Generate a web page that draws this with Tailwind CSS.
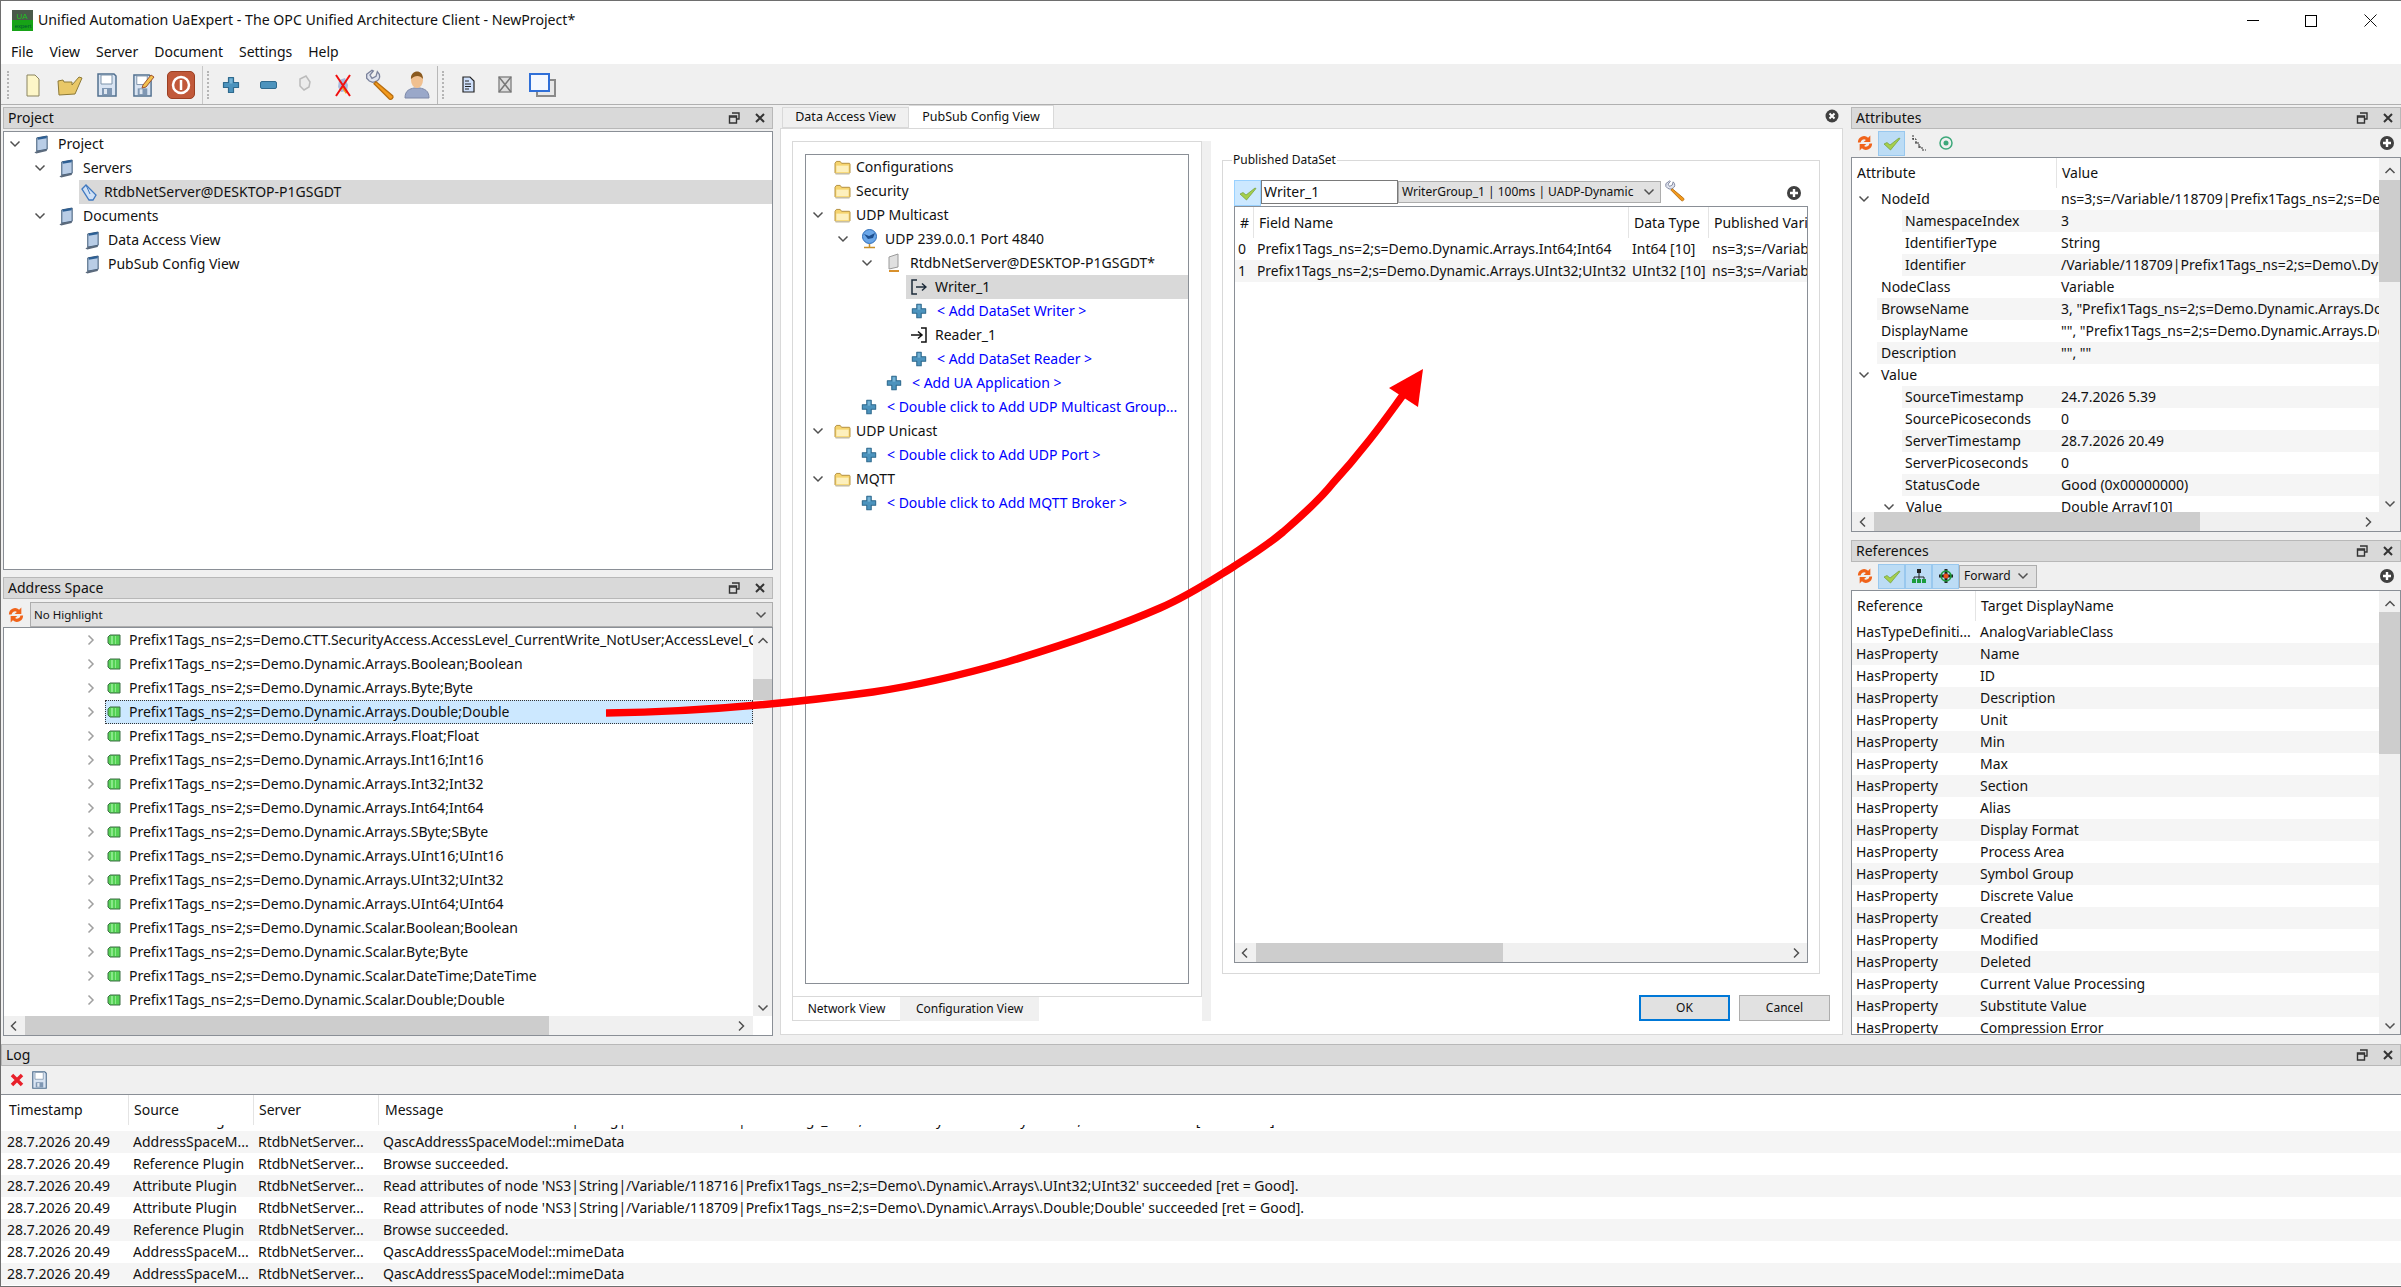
<!DOCTYPE html>
<html lang="en">
<head>
<meta charset="UTF-8">
<script src="https://cdn.jsdelivr.net/npm/@tailwindcss/browser@4"></script>
<title>UaExpert</title>
</head>
<body>
<svg class="hidden">
  <symbol id="chevd" viewBox="0 0 12 12"><path d="M1.500 3.500 6 8l4.500-4.500" fill="none" stroke="#505050" stroke-width="1.500"/></symbol>
  <symbol id="chevr" viewBox="0 0 12 12"><path d="M3.500 1.500 8 6l-4.500 4.500" fill="none" stroke="#a0a0a0" stroke-width="1.500"/></symbol>
  <symbol id="chevl" viewBox="0 0 12 12"><path d="M8 1.500 3.500 6 8 10.500" fill="none" stroke="#505050" stroke-width="1.500"/></symbol>
  <symbol id="chevr2" viewBox="0 0 12 12"><path d="M4 1.500 8.500 6 4 10.500" fill="none" stroke="#505050" stroke-width="1.500"/></symbol>
  <symbol id="chevu" viewBox="0 0 12 12"><path d="M1.500 8 6 3.500 10.500 8" fill="none" stroke="#505050" stroke-width="1.500"/></symbol>
  <symbol id="book" viewBox="0 0 18 20"><path d="M4 3 15 1v14L4 17z" fill="#b9cde6" stroke="#33506f"/><path d="M1.500 18.500 4 17l11-2-.5 2-11 2.500z" fill="#5b6a7c"/><path d="M5 2.600 14.500 1v2.500L5 5z" fill="#2c5f94"/></symbol>
  <symbol id="folder" viewBox="0 0 18 16"><path d="M1 3.500 2.500 1.500h4l1.500 2h8.500l.5 1v9l-1 1H2l-1-1z" fill="#f6d46e" stroke="#b08c3a"/><path d="M2.500 6h13v7h-13z" fill="#fdf0bd"/><path d="M1.500 14h15v1.500h-15z" fill="#c9c4b2"/></symbol>
  <symbol id="plus" viewBox="0 0 18 18"><path d="M6.500 1.500h5v5h5v5h-5v5h-5v-5h-5v-5h5z" fill="#4c93bd" stroke="#2f6a8e" stroke-linejoin="round" stroke-width="1.200"/><path d="M7.500 2.500h3v5h-3z" fill="#77b4d6"/></symbol>
  <symbol id="tag" viewBox="0 0 14 12"><path d="M3 1h10v10H3L1 9V3z" fill="#55d155" stroke="#3f6f47"/><path d="M4 2h2v8H4zM8 2h1v8H8z" fill="#8be88b"/></symbol>
  <symbol id="refresh" viewBox="0 0 18 18"><path d="M1 8.500a7 7 0 0 1 11.500-5.500l2.500-2.500v7.500H7.500l2.500-2.500A4 4 0 0 0 4 8.500zM17 9.500a7 7 0 0 1-11.500 5.500l-2.500 2.500V10h7.500L8 12.500a4 4 0 0 0 6-3z" fill="#f0631a"/></symbol>
  <symbol id="check" viewBox="0 0 18 16"><path d="M1 9l3-1.500L7 10 16 3l1 .5L7.500 15z" fill="#a6cf4c" stroke="#6f9c3a" stroke-width=".7"/></symbol>
  <symbol id="wrench" viewBox="0 0 24 24"><path d="M2 4l4-3 1 .5-2.500 3L6 7l3-1.500 1-3.500 1.500 2c1 3-1 5-3 5.500L6.500 10 4 9 2 7z" fill="#dfe3ee" stroke="#7c839c"/><path d="M9 9.500l12.500 10.500c1 1.500-1 3.500-2.500 2.500L7.500 11z" fill="#f39a1c" stroke="#b86e10"/></symbol>
  <symbol id="floatb" viewBox="0 0 12 12"><path d="M4 1h7v6H9" fill="none" stroke="#333" stroke-width="1.400"/><path d="M1.500 4h7v7h-7z" fill="none" stroke="#333" stroke-width="1.400"/><path d="M1.500 5h7" stroke="#333" stroke-width="1.500"/></symbol>
  <symbol id="closex" viewBox="0 0 12 12"><path d="M2 2l8 8M10 2l-8 8" stroke="#333" stroke-width="2"/></symbol>
  <symbol id="plusc" viewBox="0 0 14 14"><circle cx="7" cy="7" r="7" fill="#404040"/><path d="M7 3v8M3 7h8" stroke="#fff" stroke-width="2.400"/></symbol>
  <symbol id="xc" viewBox="0 0 14 14"><circle cx="7" cy="7" r="6.500" fill="#404040"/><path d="M4.500 4.500l5 5M9.500 4.500l-5 5" stroke="#fff" stroke-width="2"/></symbol>
  <symbol id="save" viewBox="0 0 22 24"><path d="M2 1h16l2 2v20H2z" fill="#d9e4f2" stroke="#52708f" stroke-width="1.500"/><path d="M5 2h11v9H5z" fill="#fff" stroke="#7d93aa"/><path d="M6 15h10v7H6z" fill="#7f97b3"/><path d="M8 16h3v5H8z" fill="#dfe7f0"/></symbol>
</svg>

<div class="relative flex h-screen w-full flex-col overflow-hidden border-t border-b border-l border-[#6e6e6e] bg-[#f0f0f0] font-['Noto_Sans',sans-serif] text-[14px] leading-none text-[#111]">

  <!-- title -->
  <div class="flex h-[39px] shrink-0 items-center bg-white pl-[11px]">
    <svg width="21" height="21" viewBox="0 0 21 21"><rect width="21" height="21" fill="#17a317"/><rect width="21" height="10" fill="#4a5a4a"/><text x="10" y="9" font-size="8" fill="#1fc01f" text-anchor="middle" font-family="Liberation Sans">UA</text><text x="11" y="18" font-size="6" fill="#053" text-anchor="middle" font-family="Liberation Sans">expert</text></svg>
    <span class="ml-[5px] text-[14.150px]">Unified Automation UaExpert - The OPC Unified Architecture Client - NewProject*</span>
    <div class="ml-auto flex items-center">
      <div class="mr-[46px] h-px w-3 bg-black"></div>
      <div class="mr-[47px] h-3 w-3 border border-black"></div>
      <svg class="mr-[24px]" width="13" height="13" viewBox="0 0 13 13"><path d="M.5.500l12 12M12.500.500l-12 12" stroke="#111"/></svg>
    </div>
  </div>
  <!-- menu -->
  <div class="flex h-[25px] shrink-0 items-center gap-[16px] border-b border-[#f0f0f0] bg-white pl-[10px]">
    <span>File</span><span>View</span><span>Server</span><span>Document</span><span>Settings</span><span>Help</span>
  </div>
  <!-- toolbar -->
  <div class="flex h-[40px] shrink-0 items-center border-b border-[#b0b0b0] pl-[6px]">
    <div class="mr-[13px] h-[28px] w-px border-l-2 border-dotted border-[#b5b5b5]"></div>
    <svg class="mr-[13px]" width="22" height="24" viewBox="0 0 16 24"><path d="M2 2h8l4 4v17H2z" fill="#fdf6c8" stroke="#8a8460"/></svg>
    <svg class="mr-[13px]" width="26" height="24" viewBox="0 0 26 24"><path d="M2 22 1 8l5-1 1 2h8v3l7-8 3 1-7 16z" fill="#e9c868" stroke="#8d7a38"/></svg>
    <svg class="mr-[14px]" width="22" height="24"><use href="#save"/></svg>
    <svg class="mr-[11px]" width="24" height="24" viewBox="0 0 24 24"><use href="#save" width="21" height="23" y="1"/><path d="M11 12l8-10 3 2-8 10-4 1z" fill="#f2c14e" stroke="#a0522d"/></svg>
    <div class="mr-[7px] flex h-[28px] w-[28px] items-center justify-center rounded-[5px] border border-[#9b3f22] bg-[#c1593a]"><svg width="20" height="20" viewBox="0 0 20 20"><circle cx="10" cy="10" r="8" fill="none" stroke="#fff" stroke-width="2.500"/><path d="M10 5v10" stroke="#fff" stroke-width="2.500"/></svg></div>
    <div class="mr-[4px] h-[38px] w-px bg-[#c8c8c8]"></div>
    <div class="mr-[13px] h-[28px] w-px border-l-2 border-dotted border-[#b5b5b5]"></div>
    <svg class="mr-[20px]" width="18" height="18"><use href="#plus"/></svg>
    <svg class="mr-[20px]" width="17" height="8" viewBox="0 0 17 8"><rect x=".5" y=".5" width="16" height="7" rx="1.500" fill="#4c93bd" stroke="#2f6a8e"/></svg>
    <svg class="mr-[21px]" width="16" height="22" viewBox="0 0 16 22"><path d="M3 5l6-3 4 6-1 5-5 3-4-4z" fill="#ececec" stroke="#bbb" stroke-width="1.500"/></svg>
    <svg class="mr-[12px]" width="18" height="24" viewBox="0 0 18 24"><path d="M5 7l6-2 3 7-1 6-6 1-3-5z" fill="#a9b9dc"/><path d="M9 14l4 6" stroke="#f39a1c" stroke-width="3"/><path d="M2 2l14 21M16 2 2 23" stroke="#f01010" stroke-width="2"/></svg>
    <svg class="mr-[8px]" width="32" height="32" viewBox="0 0 24 24"><use href="#wrench"/></svg>
    <svg class="mr-[7px]" width="26" height="29" viewBox="0 0 26 29"><path d="M1 28c0-8 5-9 9-10h6c4 1 9 2 9 10z" fill="#9aa8c9" stroke="#7c88a8"/><ellipse cx="13" cy="10" rx="6" ry="8" fill="#f0c090"/><path d="M7 9c-1-9 12-11 12 0-3-4-8-4-12 0z" fill="#8a5a20"/></svg>
    <div class="mr-[4px] h-[38px] w-px bg-[#b8b8b8]"></div>
    <div class="mr-[18px] h-[28px] w-px border-l-2 border-dotted border-[#b5b5b5]"></div>
    <svg class="mr-[22px]" width="13" height="17" viewBox="0 0 13 17"><path d="M1 1h7l4 4v11H1z" fill="#cfe0fb" stroke="#222" stroke-width="1.200"/><path d="M3 5h4M3 8h6M3 10.500h6M3 13h4" stroke="#222"/></svg>
    <svg class="mr-[16px]" width="16" height="17" viewBox="0 0 16 17"><path d="M2 1h12v15H2z" fill="#ddd" stroke="#8a8a8a" stroke-width="1.500"/><path d="M2 1l12 15M14 1 2 16" stroke="#777" stroke-width="1.500"/></svg>
    <svg width="27" height="24" viewBox="0 0 27 24"><rect x="8" y="7" width="18" height="16" fill="#e8e8e8" stroke="#8a8a8a" stroke-width="2"/><rect x="1" y="1" width="19" height="17" fill="#f4f8ff" stroke="#2f6fd8" stroke-width="2"/></svg>
  </div>

  <!-- main -->
  <div class="flex h-[935px] shrink-0">
    <!-- left docks -->
    <div class="ml-[2px] flex w-[770px] shrink-0 flex-col pt-[2px]">
      <div class="flex h-[22px] shrink-0 items-center border border-[#b8b8b8] bg-[#d9d9d9] pl-[4px]">
        <span>Project</span>
        <svg class="ml-auto mr-[14px]" width="12" height="12"><use href="#floatb"/></svg>
        <svg class="mr-[6px]" width="12" height="12"><use href="#closex"/></svg>
      </div>
      <div class="mt-[2px] h-[439px] shrink-0 border border-[#8a8f96] bg-white">
        <div class="flex h-6 items-center pl-[5px]"><svg class="mr-[12px]" width="12" height="12"><use href="#chevd"/></svg><svg class="mr-[8px]" width="17" height="19"><use href="#book"/></svg>Project</div>
        <div class="flex h-6 items-center pl-[30px]"><svg class="mr-[12px]" width="12" height="12"><use href="#chevd"/></svg><svg class="mr-[8px]" width="17" height="19"><use href="#book"/></svg>Servers</div>
        <div class="ml-[75px] flex h-6 items-center bg-[#d9d9d9] pl-[2px]"><svg class="mr-[7px]" width="16" height="17" viewBox="0 0 16 17"><path d="M1 5l4-4 10 10-3 5H8z" fill="#cfe0f5" stroke="#3f78c0" stroke-width="1.300"/><path d="M5 1l4 9" stroke="#3f78c0"/></svg>RtdbNetServer@DESKTOP-P1GSGDT</div>
        <div class="flex h-6 items-center pl-[30px]"><svg class="mr-[12px]" width="12" height="12"><use href="#chevd"/></svg><svg class="mr-[8px]" width="17" height="19"><use href="#book"/></svg>Documents</div>
        <div class="flex h-6 items-center pl-[80px]"><svg class="mr-[7px]" width="17" height="19"><use href="#book"/></svg>Data Access View</div>
        <div class="flex h-6 items-center pl-[80px]"><svg class="mr-[7px]" width="17" height="19"><use href="#book"/></svg>PubSub Config View</div>
      </div>
      <div class="mt-[7px] flex h-[22px] shrink-0 items-center border border-[#b8b8b8] bg-[#d9d9d9] pl-[4px]">
        <span>Address Space</span>
        <svg class="ml-auto mr-[14px]" width="12" height="12"><use href="#floatb"/></svg>
        <svg class="mr-[6px]" width="12" height="12"><use href="#closex"/></svg>
      </div>
      <div class="mt-[3px] flex h-[25px] shrink-0 items-center pl-[4px]">
        <svg class="mr-[5px]" width="18" height="16"><use href="#refresh"/></svg>
        <div class="flex h-[25px] flex-1 items-center border border-[#adadad] bg-[#e1e1e1] pl-[3px] text-[11.500px]">No Highlight<svg class="ml-auto mr-[5px]" width="12" height="12"><use href="#chevd"/></svg></div>
      </div>
      <div class="relative h-[409px] shrink-0 overflow-hidden border border-[#8a8f96] bg-white pr-[19px]">
        <div class="flex h-[388px] flex-col overflow-hidden">
          <div class="flex h-6 shrink-0 items-center overflow-hidden pl-[81px] whitespace-nowrap"><svg class="mr-[10px] shrink-0" width="12" height="14"><use href="#chevr"/></svg><svg class="mr-[8px] shrink-0" width="14" height="12"><use href="#tag"/></svg>Prefix1Tags_ns=2;s=Demo.CTT.SecurityAccess.AccessLevel_CurrentWrite_NotUser;AccessLevel_CurrentWrite_NotUser</div>
          <div class="flex h-6 shrink-0 items-center pl-[81px]"><svg class="mr-[10px]" width="12" height="14"><use href="#chevr"/></svg><svg class="mr-[8px]" width="14" height="12"><use href="#tag"/></svg>Prefix1Tags_ns=2;s=Demo.Dynamic.Arrays.Boolean;Boolean</div>
          <div class="flex h-6 shrink-0 items-center pl-[81px]"><svg class="mr-[10px]" width="12" height="14"><use href="#chevr"/></svg><svg class="mr-[8px]" width="14" height="12"><use href="#tag"/></svg>Prefix1Tags_ns=2;s=Demo.Dynamic.Arrays.Byte;Byte</div>
          <div class="flex h-6 shrink-0 items-center pl-[81px]"><svg class="mr-[8px]" width="12" height="14"><use href="#chevr"/></svg><div class="flex h-6 flex-1 items-center border border-dotted border-[#333] bg-[#cce8ff] pl-px"><svg class="mr-[8px]" width="14" height="12"><use href="#tag"/></svg>Prefix1Tags_ns=2;s=Demo.Dynamic.Arrays.Double;Double</div></div>
          <div class="flex h-6 shrink-0 items-center pl-[81px]"><svg class="mr-[10px]" width="12" height="14"><use href="#chevr"/></svg><svg class="mr-[8px]" width="14" height="12"><use href="#tag"/></svg>Prefix1Tags_ns=2;s=Demo.Dynamic.Arrays.Float;Float</div>
          <div class="flex h-6 shrink-0 items-center pl-[81px]"><svg class="mr-[10px]" width="12" height="14"><use href="#chevr"/></svg><svg class="mr-[8px]" width="14" height="12"><use href="#tag"/></svg>Prefix1Tags_ns=2;s=Demo.Dynamic.Arrays.Int16;Int16</div>
          <div class="flex h-6 shrink-0 items-center pl-[81px]"><svg class="mr-[10px]" width="12" height="14"><use href="#chevr"/></svg><svg class="mr-[8px]" width="14" height="12"><use href="#tag"/></svg>Prefix1Tags_ns=2;s=Demo.Dynamic.Arrays.Int32;Int32</div>
          <div class="flex h-6 shrink-0 items-center pl-[81px]"><svg class="mr-[10px]" width="12" height="14"><use href="#chevr"/></svg><svg class="mr-[8px]" width="14" height="12"><use href="#tag"/></svg>Prefix1Tags_ns=2;s=Demo.Dynamic.Arrays.Int64;Int64</div>
          <div class="flex h-6 shrink-0 items-center pl-[81px]"><svg class="mr-[10px]" width="12" height="14"><use href="#chevr"/></svg><svg class="mr-[8px]" width="14" height="12"><use href="#tag"/></svg>Prefix1Tags_ns=2;s=Demo.Dynamic.Arrays.SByte;SByte</div>
          <div class="flex h-6 shrink-0 items-center pl-[81px]"><svg class="mr-[10px]" width="12" height="14"><use href="#chevr"/></svg><svg class="mr-[8px]" width="14" height="12"><use href="#tag"/></svg>Prefix1Tags_ns=2;s=Demo.Dynamic.Arrays.UInt16;UInt16</div>
          <div class="flex h-6 shrink-0 items-center pl-[81px]"><svg class="mr-[10px]" width="12" height="14"><use href="#chevr"/></svg><svg class="mr-[8px]" width="14" height="12"><use href="#tag"/></svg>Prefix1Tags_ns=2;s=Demo.Dynamic.Arrays.UInt32;UInt32</div>
          <div class="flex h-6 shrink-0 items-center pl-[81px]"><svg class="mr-[10px]" width="12" height="14"><use href="#chevr"/></svg><svg class="mr-[8px]" width="14" height="12"><use href="#tag"/></svg>Prefix1Tags_ns=2;s=Demo.Dynamic.Arrays.UInt64;UInt64</div>
          <div class="flex h-6 shrink-0 items-center pl-[81px]"><svg class="mr-[10px]" width="12" height="14"><use href="#chevr"/></svg><svg class="mr-[8px]" width="14" height="12"><use href="#tag"/></svg>Prefix1Tags_ns=2;s=Demo.Dynamic.Scalar.Boolean;Boolean</div>
          <div class="flex h-6 shrink-0 items-center pl-[81px]"><svg class="mr-[10px]" width="12" height="14"><use href="#chevr"/></svg><svg class="mr-[8px]" width="14" height="12"><use href="#tag"/></svg>Prefix1Tags_ns=2;s=Demo.Dynamic.Scalar.Byte;Byte</div>
          <div class="flex h-6 shrink-0 items-center pl-[81px]"><svg class="mr-[10px]" width="12" height="14"><use href="#chevr"/></svg><svg class="mr-[8px]" width="14" height="12"><use href="#tag"/></svg>Prefix1Tags_ns=2;s=Demo.Dynamic.Scalar.DateTime;DateTime</div>
          <div class="flex h-6 shrink-0 items-center pl-[81px]"><svg class="mr-[10px]" width="12" height="14"><use href="#chevr"/></svg><svg class="mr-[8px]" width="14" height="12"><use href="#tag"/></svg>Prefix1Tags_ns=2;s=Demo.Dynamic.Scalar.Double;Double</div>
        </div>
        <!-- scrollbars -->
        <div class="absolute top-0 right-0 flex h-[388px] w-[19px] flex-col items-center bg-[#f0f0f0] pt-[7px]">
          <svg width="12" height="12"><use href="#chevu"/></svg>
          <div class="mt-[32px] h-[21px] w-[19px] bg-[#cdcdcd]"></div>
          <svg class="mt-auto mb-[2px]" width="12" height="12"><use href="#chevd"/></svg>
        </div>
        <div class="flex h-[19px] items-center bg-[#f0f0f0] pl-[4px]">
          <svg class="mr-[5px]" width="12" height="12"><use href="#chevl"/></svg>
          <div class="h-[19px] w-[524px] bg-[#cdcdcd]"></div>
          <svg class="ml-[186px]" width="12" height="12"><use href="#chevr2"/></svg>
        </div>
      </div>
    </div>

    <!-- center -->
    <div class="ml-[7px] w-[1063px] shrink-0 flex-col">
      <div class="relative flex h-[23px] items-end pl-[2px]">
        <div class="flex h-[21px] w-[127px] items-center justify-center border border-[#d9d9d9] bg-[#f0f0f0] text-[12.500px]">Data Access View</div>
        <div class="flex h-[23px] w-[145px] items-center justify-center border-t border-r border-[#d9d9d9] bg-white text-[12.500px]">PubSub Config View</div>
        <svg class="absolute top-[4px] right-[4px]" width="14" height="14"><use href="#xc"/></svg>
      </div>
      <div class="flex h-[907px] border border-[#d9d9d9] bg-white pt-[12px] pl-[11px]">
        <div class="flex w-[410px] shrink-0 flex-col">
          <div class="h-[856px] border border-[#d9d9d9] p-3">
            <div class="h-[830px] border border-[#8a8f96]">
              <div class="flex h-6 items-center pl-[28px]"><svg class="mr-[5px]" width="17" height="15"><use href="#folder"/></svg>Configurations</div>
              <div class="flex h-6 items-center pl-[28px]"><svg class="mr-[5px]" width="17" height="15"><use href="#folder"/></svg>Security</div>
              <div class="flex h-6 items-center pl-[6px]"><svg class="mr-[10px]" width="12" height="12"><use href="#chevd"/></svg><svg class="mr-[5px]" width="17" height="15"><use href="#folder"/></svg>UDP Multicast</div>
              <div class="flex h-6 items-center pl-[31px]"><svg class="mr-[12px]" width="12" height="12"><use href="#chevd"/></svg><svg class="mr-[7px]" width="17" height="20" viewBox="0 0 17 20"><circle cx="8.500" cy="7.500" r="7" fill="#6aa6e8" stroke="#2c6cb8"/><path d="M3 5l5 2 6-3-2 5-5 1z" fill="#1d4f8f"/><path d="M8.500 15v3M3 18.500h11" stroke="#c8902c" stroke-width="1.500"/></svg>UDP 239.0.0.1 Port 4840</div>
              <div class="flex h-6 items-center pl-[55px]"><svg class="mr-[15px]" width="12" height="12"><use href="#chevd"/></svg><svg class="mr-[10px]" width="12" height="20" viewBox="0 0 12 20"><path d="M1 4l9-3v13l-9 2z" fill="#e0e0e0" stroke="#9a9a9a"/><path d="M1 18h10" stroke="#d8902c" stroke-width="2"/></svg>RtdbNetServer@DESKTOP-P1GSGDT*</div>
              <div class="ml-[100px] flex h-6 items-center bg-[#d9d9d9] pl-[5px]"><svg class="mr-[8px]" width="16" height="16" viewBox="0 0 16 16"><path d="M6 1H1v14h5" fill="none" stroke="#1d2b3a" stroke-width="1.500"/><path d="M5 8h10M11 4.500 15 8l-4 3.500" fill="none" stroke="#1d2b3a" stroke-width="1.500"/></svg>Writer_1</div>
              <div class="flex h-6 items-center pl-[105px] text-[#0000ff]"><svg class="mr-[10px]" width="16" height="16"><use href="#plus"/></svg>&lt; Add DataSet Writer &gt;</div>
              <div class="flex h-6 items-center pl-[105px]"><svg class="mr-[8px]" width="16" height="16" viewBox="0 0 16 16"><path d="M10 1h5v14h-5" fill="none" stroke="#111" stroke-width="1.500"/><path d="M0 8h10M7 4.500 11 8l-4 3.500" fill="none" stroke="#111" stroke-width="1.500"/></svg>Reader_1</div>
              <div class="flex h-6 items-center pl-[105px] text-[#0000ff]"><svg class="mr-[10px]" width="16" height="16"><use href="#plus"/></svg>&lt; Add DataSet Reader &gt;</div>
              <div class="flex h-6 items-center pl-[80px] text-[#0000ff]"><svg class="mr-[10px]" width="16" height="16"><use href="#plus"/></svg>&lt; Add UA Application &gt;</div>
              <div class="flex h-6 items-center pl-[55px] whitespace-nowrap text-[#0000ff]"><svg class="mr-[10px]" width="16" height="16"><use href="#plus"/></svg>&lt; Double click to Add UDP Multicast Group...</div>
              <div class="flex h-6 items-center pl-[6px]"><svg class="mr-[10px]" width="12" height="12"><use href="#chevd"/></svg><svg class="mr-[5px]" width="17" height="15"><use href="#folder"/></svg>UDP Unicast</div>
              <div class="flex h-6 items-center pl-[55px] text-[#0000ff]"><svg class="mr-[10px]" width="16" height="16"><use href="#plus"/></svg>&lt; Double click to Add UDP Port &gt;</div>
              <div class="flex h-6 items-center pl-[6px]"><svg class="mr-[10px]" width="12" height="12"><use href="#chevd"/></svg><svg class="mr-[5px]" width="17" height="15"><use href="#folder"/></svg>MQTT</div>
              <div class="flex h-6 items-center pl-[55px] text-[#0000ff]"><svg class="mr-[10px]" width="16" height="16"><use href="#plus"/></svg>&lt; Double click to Add MQTT Broker &gt;</div>
            </div>
          </div>
          <div class="flex h-[24px]">
            <div class="flex w-[108px] items-center justify-center border-b border-l border-[#d9d9d9] bg-white text-[12px]">Network View</div>
            <div class="flex w-[139px] items-center justify-center bg-[#f0f0f0] text-[12px]">Configuration View</div>
          </div>
        </div>
        <div class="h-[880px] w-[9px] shrink-0 bg-[#f0f0f0]"></div>
        <div class="flex flex-1 flex-col pt-[19px] pl-[11px]">
          <div class="relative h-[814px] w-[598px] border border-[#d9d9d9] px-[11px] pt-[19px]">
            <span class="absolute -top-[7px] left-[9px] bg-white px-px text-[12px]">Published DataSet</span>
            <div class="flex h-[26px] items-start">
              <div class="flex h-[26px] w-[27px] items-center justify-center border border-[#99d1ff] bg-[#cce8ff]"><svg width="18" height="16"><use href="#check"/></svg></div>
              <div class="flex h-[24px] w-[137px] items-center border border-[#7a7a7a] bg-white pl-[2px]">Writer_1</div>
              <div class="mt-px flex h-[22px] w-[263px] items-center border border-[#adadad] bg-[#e1e1e1] pl-[3px] text-[12px] whitespace-nowrap">WriterGroup_1 | 100ms | UADP-Dynamic<svg class="ml-auto mr-[5px]" width="12" height="12"><use href="#chevd"/></svg></div>
              <svg class="ml-[3px]" width="22" height="22" viewBox="0 0 24 24"><use href="#wrench"/></svg>
              <svg class="mt-[6px] mr-[7px] ml-auto" width="14" height="14"><use href="#plusc"/></svg>
            </div>
            <div class="flex h-[757px] w-[574px] flex-col border border-[#8a8f96]">
              <div class="flex h-[31px] shrink-0 items-center overflow-hidden whitespace-nowrap">
                <div class="flex h-[31px] w-[19px] shrink-0 items-center border-r border-[#e4e4e4] pl-[5px]">#</div>
                <div class="flex h-[31px] w-[375px] shrink-0 items-center border-r border-[#e4e4e4] pl-[5px]">Field Name</div>
                <div class="flex h-[31px] w-[80px] shrink-0 items-center border-r border-[#e4e4e4] pl-[5px]">Data Type</div>
                <div class="pl-[5px]">Published Variable</div>
              </div>
              <div class="flex h-[22px] shrink-0 items-center overflow-hidden whitespace-nowrap"><span class="w-[19px] shrink-0 pl-[3px]">0</span><span class="w-[375px] shrink-0 pl-[3px]">Prefix1Tags_ns=2;s=Demo.Dynamic.Arrays.Int64;Int64</span><span class="w-[80px] shrink-0 pl-[3px]">Int64 [10]</span><span class="pl-[3px]">ns=3;s=/Variable/118716</span></div>
              <div class="flex h-[22px] shrink-0 items-center overflow-hidden bg-[#f5f5f5] whitespace-nowrap"><span class="w-[19px] shrink-0 pl-[3px]">1</span><span class="w-[375px] shrink-0 pl-[3px] text-[13.800px]">Prefix1Tags_ns=2;s=Demo.Dynamic.Arrays.UInt32;UInt32</span><span class="w-[80px] shrink-0 pl-[3px]">UInt32 [10]</span><span class="pl-[3px]">ns=3;s=/Variable/118716</span></div>
              <div class="flex-1"></div>
              <div class="flex h-[19px] shrink-0 items-center bg-[#f0f0f0] pl-[4px]">
                <svg class="mr-[5px]" width="12" height="12"><use href="#chevl"/></svg>
                <div class="h-[19px] w-[247px] bg-[#cdcdcd]"></div>
                <svg class="ml-auto mr-[5px]" width="12" height="12"><use href="#chevr2"/></svg>
              </div>
            </div>
          </div>
          <div class="mt-[21px] flex gap-[9px] pl-[417px]">
            <button class="h-[26px] w-[91px] border-2 border-[#0078d7] bg-[#e1e1e1] text-[12px]">OK</button>
            <button class="h-[26px] w-[91px] border border-[#adadad] bg-[#e1e1e1] text-[12px]">Cancel</button>
          </div>
        </div>
      </div>
    </div>

    <!-- right docks -->
    <div class="ml-[8px] flex w-[550px] shrink-0 flex-col pt-[2px]">
      <div class="flex h-[22px] shrink-0 items-center border border-[#b8b8b8] bg-[#d9d9d9] pl-[4px]">
        <span>Attributes</span>
        <svg class="ml-auto mr-[14px]" width="12" height="12"><use href="#floatb"/></svg>
        <svg class="mr-[6px]" width="12" height="12"><use href="#closex"/></svg>
      </div>
      <div class="flex h-[28px] shrink-0 items-center pl-[5px]">
        <svg class="mr-[4px]" width="18" height="16"><use href="#refresh"/></svg>
        <div class="mr-[6px] flex h-[25px] w-[27px] items-center justify-center border border-[#99c8ee] bg-[#bcdcf5]"><svg width="18" height="16"><use href="#check"/></svg></div>
        <svg class="mr-[12px]" width="16" height="18" viewBox="0 0 16 18"><path d="M2 1v4h3v4h3v4h3v3h4M1 5h3M4 9h3M7 13h3" fill="none" stroke="#333" stroke-dasharray="2 1"/></svg>
        <svg width="14" height="14" viewBox="0 0 14 14"><circle cx="7" cy="7" r="6" fill="none" stroke="#3da87a" stroke-width="1.500"/><circle cx="7" cy="7" r="2.500" fill="#3da87a"/></svg>
        <svg class="ml-auto mr-[7px]" width="14" height="14"><use href="#plusc"/></svg>
      </div>
      <div class="relative h-[375px] shrink-0 overflow-hidden border border-[#8a8f96] bg-white pr-[21px]">
        <div class="flex h-[30px] items-center"><div class="flex h-[30px] w-[205px] shrink-0 items-center border-r border-[#e4e4e4] pl-[5px]">Attribute</div><span class="pl-[5px]">Value</span></div>
        <div class="h-[324px] overflow-hidden whitespace-nowrap">
          <div class="flex h-[22px] items-center"><span class="flex w-[205px] shrink-0 items-center pl-[6px]"><svg class="mr-[11px]" width="12" height="12"><use href="#chevd"/></svg>NodeId</span><span class="pl-[4px]">ns=3;s=/Variable/118709|Prefix1Tags_ns=2;s=Demo\.Dynamic\.Arrays\.Double;Double</span></div>
          <div class="ml-[50px] flex h-[22px] items-center bg-[#f5f5f5]"><span class="w-[155px] shrink-0 pl-[3px]">NamespaceIndex</span><span class="pl-[4px]">3</span></div>
          <div class="ml-[50px] flex h-[22px] items-center"><span class="w-[155px] shrink-0 pl-[3px]">IdentifierType</span><span class="pl-[4px]">String</span></div>
          <div class="ml-[50px] flex h-[22px] items-center bg-[#f5f5f5]"><span class="w-[155px] shrink-0 pl-[3px]">Identifier</span><span class="pl-[4px]">/Variable/118709|Prefix1Tags_ns=2;s=Demo\.Dynamic\.Arrays\.Double;Double</span></div>
          <div class="ml-[25px] flex h-[22px] items-center"><span class="w-[180px] shrink-0 pl-[4px]">NodeClass</span><span class="pl-[4px]">Variable</span></div>
          <div class="ml-[25px] flex h-[22px] items-center bg-[#f5f5f5]"><span class="w-[180px] shrink-0 pl-[4px]">BrowseName</span><span class="pl-[4px]">3, "Prefix1Tags_ns=2;s=Demo.Dynamic.Arrays.Double;Double"</span></div>
          <div class="ml-[25px] flex h-[22px] items-center"><span class="w-[180px] shrink-0 pl-[4px]">DisplayName</span><span class="pl-[4px]">"", "Prefix1Tags_ns=2;s=Demo.Dynamic.Arrays.Double;Double"</span></div>
          <div class="ml-[25px] flex h-[22px] items-center bg-[#f5f5f5]"><span class="w-[180px] shrink-0 pl-[4px]">Description</span><span class="pl-[4px]">"", ""</span></div>
          <div class="flex h-[22px] items-center"><span class="flex w-[205px] shrink-0 items-center pl-[6px]"><svg class="mr-[11px]" width="12" height="12"><use href="#chevd"/></svg>Value</span></div>
          <div class="ml-[50px] flex h-[22px] items-center bg-[#f5f5f5]"><span class="w-[155px] shrink-0 pl-[3px]">SourceTimestamp</span><span class="pl-[4px]">24.7.2026 5.39</span></div>
          <div class="ml-[50px] flex h-[22px] items-center"><span class="w-[155px] shrink-0 pl-[3px]">SourcePicoseconds</span><span class="pl-[4px]">0</span></div>
          <div class="ml-[50px] flex h-[22px] items-center bg-[#f5f5f5]"><span class="w-[155px] shrink-0 pl-[3px]">ServerTimestamp</span><span class="pl-[4px]">28.7.2026 20.49</span></div>
          <div class="ml-[50px] flex h-[22px] items-center"><span class="w-[155px] shrink-0 pl-[3px]">ServerPicoseconds</span><span class="pl-[4px]">0</span></div>
          <div class="ml-[50px] flex h-[22px] items-center bg-[#f5f5f5]"><span class="w-[155px] shrink-0 pl-[3px]">StatusCode</span><span class="pl-[4px]">Good (0x00000000)</span></div>
          <div class="flex h-[22px] items-center"><span class="flex w-[205px] shrink-0 items-center pl-[31px]"><svg class="mr-[11px]" width="12" height="12"><use href="#chevd"/></svg>Value</span><span class="pl-[4px]">Double Array[10]</span></div>
        </div>
        <div class="absolute top-0 right-0 flex h-[354px] w-[21px] flex-col items-center bg-[#f0f0f0] pt-[7px]">
          <svg width="12" height="12"><use href="#chevu"/></svg>
          <div class="mt-[3px] h-[102px] w-[21px] bg-[#cdcdcd]"></div>
          <svg class="mt-auto mb-[2px]" width="12" height="12"><use href="#chevd"/></svg>
        </div>
        <div class="absolute right-0 bottom-0 left-0 flex h-[19px] items-center bg-[#f0f0f0] pl-[5px]">
          <svg class="mr-[5px]" width="12" height="12"><use href="#chevl"/></svg>
          <div class="h-[19px] w-[326px] bg-[#cdcdcd]"></div>
          <svg class="ml-auto mr-[26px]" width="12" height="12"><use href="#chevr2"/></svg>
        </div>
      </div>
      <div class="mt-[8px] flex h-[22px] shrink-0 items-center border border-[#b8b8b8] bg-[#d9d9d9] pl-[4px]">
        <span>References</span>
        <svg class="ml-auto mr-[14px]" width="12" height="12"><use href="#floatb"/></svg>
        <svg class="mr-[6px]" width="12" height="12"><use href="#closex"/></svg>
      </div>
      <div class="flex h-[28px] shrink-0 items-center pl-[5px]">
        <svg class="mr-[4px]" width="18" height="16"><use href="#refresh"/></svg>
        <div class="flex h-[25px] w-[27px] items-center justify-center border border-[#99c8ee] bg-[#bcdcf5]"><svg width="18" height="16"><use href="#check"/></svg></div>
        <div class="flex h-[25px] w-[27px] items-center justify-center border border-[#99c8ee] bg-[#bcdcf5]"><svg width="16" height="16" viewBox="0 0 16 16"><path d="M8 5v4M3 11V9h10v2M8 9v2" fill="none" stroke="#222"/><rect x="6" y="1" width="4" height="4" fill="#222"/><rect x="1" y="11" width="4" height="4" fill="#1c9c3c"/><rect x="6" y="11" width="4" height="4" fill="#1c9c3c"/><rect x="11" y="11" width="4" height="4" fill="#1c9c3c"/></svg></div>
        <div class="flex h-[25px] w-[27px] items-center justify-center border border-[#99c8ee] bg-[#bcdcf5]"><svg width="16" height="16" viewBox="0 0 16 16"><path d="M8 1v14M1 8h14" stroke="#222" stroke-width="3"/><circle cx="8" cy="8" r="5" fill="none" stroke="#1c9c3c" stroke-width="1.500"/><circle cx="8" cy="8" r="2.500" fill="#e8501c"/></svg></div>
        <div class="flex h-[23px] w-[78px] items-center border border-[#adadad] bg-[#e1e1e1] pl-[4px] text-[12px]">Forward<svg class="ml-auto mr-[7px]" width="12" height="12"><use href="#chevd"/></svg></div>
        <svg class="ml-auto mr-[7px]" width="14" height="14"><use href="#plusc"/></svg>
      </div>
      <div class="relative h-[445px] shrink-0 overflow-hidden border border-[#8a8f96] bg-white pr-[21px]">
        <div class="flex h-[30px] items-center"><div class="flex h-[30px] w-[124px] shrink-0 items-center border-r border-[#e4e4e4] pl-[5px]">Reference</div><span class="pl-[5px]">Target DisplayName</span></div>
        <div class="whitespace-nowrap">
          <div class="flex h-[22px] items-center"><span class="w-[124px] shrink-0 pl-[4px]">HasTypeDefiniti...</span><span class="pl-[4px]">AnalogVariableClass</span></div>
          <div class="flex h-[22px] items-center bg-[#f5f5f5]"><span class="w-[124px] shrink-0 pl-[4px]">HasProperty</span><span class="pl-[4px]">Name</span></div>
          <div class="flex h-[22px] items-center"><span class="w-[124px] shrink-0 pl-[4px]">HasProperty</span><span class="pl-[4px]">ID</span></div>
          <div class="flex h-[22px] items-center bg-[#f5f5f5]"><span class="w-[124px] shrink-0 pl-[4px]">HasProperty</span><span class="pl-[4px]">Description</span></div>
          <div class="flex h-[22px] items-center"><span class="w-[124px] shrink-0 pl-[4px]">HasProperty</span><span class="pl-[4px]">Unit</span></div>
          <div class="flex h-[22px] items-center bg-[#f5f5f5]"><span class="w-[124px] shrink-0 pl-[4px]">HasProperty</span><span class="pl-[4px]">Min</span></div>
          <div class="flex h-[22px] items-center"><span class="w-[124px] shrink-0 pl-[4px]">HasProperty</span><span class="pl-[4px]">Max</span></div>
          <div class="flex h-[22px] items-center bg-[#f5f5f5]"><span class="w-[124px] shrink-0 pl-[4px]">HasProperty</span><span class="pl-[4px]">Section</span></div>
          <div class="flex h-[22px] items-center"><span class="w-[124px] shrink-0 pl-[4px]">HasProperty</span><span class="pl-[4px]">Alias</span></div>
          <div class="flex h-[22px] items-center bg-[#f5f5f5]"><span class="w-[124px] shrink-0 pl-[4px]">HasProperty</span><span class="pl-[4px]">Display Format</span></div>
          <div class="flex h-[22px] items-center"><span class="w-[124px] shrink-0 pl-[4px]">HasProperty</span><span class="pl-[4px]">Process Area</span></div>
          <div class="flex h-[22px] items-center bg-[#f5f5f5]"><span class="w-[124px] shrink-0 pl-[4px]">HasProperty</span><span class="pl-[4px]">Symbol Group</span></div>
          <div class="flex h-[22px] items-center"><span class="w-[124px] shrink-0 pl-[4px]">HasProperty</span><span class="pl-[4px]">Discrete Value</span></div>
          <div class="flex h-[22px] items-center bg-[#f5f5f5]"><span class="w-[124px] shrink-0 pl-[4px]">HasProperty</span><span class="pl-[4px]">Created</span></div>
          <div class="flex h-[22px] items-center"><span class="w-[124px] shrink-0 pl-[4px]">HasProperty</span><span class="pl-[4px]">Modified</span></div>
          <div class="flex h-[22px] items-center bg-[#f5f5f5]"><span class="w-[124px] shrink-0 pl-[4px]">HasProperty</span><span class="pl-[4px]">Deleted</span></div>
          <div class="flex h-[22px] items-center"><span class="w-[124px] shrink-0 pl-[4px]">HasProperty</span><span class="pl-[4px]">Current Value Processing</span></div>
          <div class="flex h-[22px] items-center bg-[#f5f5f5]"><span class="w-[124px] shrink-0 pl-[4px]">HasProperty</span><span class="pl-[4px]">Substitute Value</span></div>
          <div class="flex h-[22px] items-center"><span class="w-[124px] shrink-0 pl-[4px]">HasProperty</span><span class="pl-[4px]">Compression Error</span></div>
        </div>
        <div class="absolute top-0 right-0 bottom-0 flex w-[21px] flex-col items-center bg-[#f0f0f0] pt-[7px]">
          <svg width="12" height="12"><use href="#chevu"/></svg>
          <div class="mt-[2px] h-[142px] w-[21px] bg-[#cdcdcd]"></div>
          <svg class="mt-auto mb-[2px]" width="12" height="12"><use href="#chevd"/></svg>
        </div>
      </div>
    </div>
  </div>

  <!-- log -->
  <div class="mt-[4px] flex h-[22px] shrink-0 items-center border border-[#b8b8b8] bg-[#d9d9d9] pl-[4px]">
    <span>Log</span>
    <svg class="ml-auto mr-[14px]" width="12" height="12"><use href="#floatb"/></svg>
    <svg class="mr-[6px]" width="12" height="12"><use href="#closex"/></svg>
  </div>
  <div class="flex h-[29px] shrink-0 items-center border-b border-[#8a8f96] pl-[9px]">
    <svg class="mr-[7px]" width="14" height="14" viewBox="0 0 14 14"><path d="M2 2l10 10M12 2 2 12" stroke="#e8202a" stroke-width="3.500"/></svg>
    <svg width="17" height="18"><use href="#save"/></svg>
  </div>
  <div class="min-h-0 flex-1 overflow-hidden bg-white whitespace-nowrap">
    <div class="flex h-[30px] items-center">
      <span class="flex h-[30px] w-[128px] shrink-0 items-center border-r border-[#e4e4e4] pl-[8px]">Timestamp</span>
      <span class="flex h-[30px] w-[125px] shrink-0 items-center border-r border-[#e4e4e4] pl-[5px]">Source</span>
      <span class="flex h-[30px] w-[125px] shrink-0 items-center border-r border-[#e4e4e4] pl-[5px]">Server</span>
      <span class="pl-[6px]">Message</span>
    </div>
    <div class="flex h-[6px] items-end overflow-hidden"><div class="flex h-[22px] shrink-0 items-center"><span class="w-[128px] shrink-0 pl-[6px]">28.7.2026 20.49</span><span class="w-[125px] shrink-0 pl-[4px]">Attribute Plugin</span><span class="w-[125px] shrink-0 pl-[4px]">RtdbNetServer...</span><span class="pl-[4px]">Read attributes of node 'NS3|String|/Variable/118716|Prefix1Tags_ns=2;s=Demo\.Dynamic\.Arrays\.Int64;Int64' succeeded [ret = Good].</span></div></div>
    <div class="flex h-[22px] items-center bg-[#f5f5f5]"><span class="w-[128px] shrink-0 pl-[6px]">28.7.2026 20.49</span><span class="w-[125px] shrink-0 pl-[4px]">AddressSpaceM...</span><span class="w-[125px] shrink-0 pl-[4px]">RtdbNetServer...</span><span class="pl-[4px]">QascAddressSpaceModel::mimeData</span></div>
    <div class="flex h-[22px] items-center"><span class="w-[128px] shrink-0 pl-[6px]">28.7.2026 20.49</span><span class="w-[125px] shrink-0 pl-[4px]">Reference Plugin</span><span class="w-[125px] shrink-0 pl-[4px]">RtdbNetServer...</span><span class="pl-[4px]">Browse succeeded.</span></div>
    <div class="flex h-[22px] items-center bg-[#f5f5f5]"><span class="w-[128px] shrink-0 pl-[6px]">28.7.2026 20.49</span><span class="w-[125px] shrink-0 pl-[4px]">Attribute Plugin</span><span class="w-[125px] shrink-0 pl-[4px]">RtdbNetServer...</span><span class="pl-[4px]">Read attributes of node 'NS3|String|/Variable/118716|Prefix1Tags_ns=2;s=Demo\.Dynamic\.Arrays\.UInt32;UInt32' succeeded [ret = Good].</span></div>
    <div class="flex h-[22px] items-center"><span class="w-[128px] shrink-0 pl-[6px]">28.7.2026 20.49</span><span class="w-[125px] shrink-0 pl-[4px]">Attribute Plugin</span><span class="w-[125px] shrink-0 pl-[4px]">RtdbNetServer...</span><span class="pl-[4px]">Read attributes of node 'NS3|String|/Variable/118709|Prefix1Tags_ns=2;s=Demo\.Dynamic\.Arrays\.Double;Double' succeeded [ret = Good].</span></div>
    <div class="flex h-[22px] items-center bg-[#f5f5f5]"><span class="w-[128px] shrink-0 pl-[6px]">28.7.2026 20.49</span><span class="w-[125px] shrink-0 pl-[4px]">Reference Plugin</span><span class="w-[125px] shrink-0 pl-[4px]">RtdbNetServer...</span><span class="pl-[4px]">Browse succeeded.</span></div>
    <div class="flex h-[22px] items-center"><span class="w-[128px] shrink-0 pl-[6px]">28.7.2026 20.49</span><span class="w-[125px] shrink-0 pl-[4px]">AddressSpaceM...</span><span class="w-[125px] shrink-0 pl-[4px]">RtdbNetServer...</span><span class="pl-[4px]">QascAddressSpaceModel::mimeData</span></div>
    <div class="flex h-[22px] items-center bg-[#f5f5f5]"><span class="w-[128px] shrink-0 pl-[6px]">28.7.2026 20.49</span><span class="w-[125px] shrink-0 pl-[4px]">AddressSpaceM...</span><span class="w-[125px] shrink-0 pl-[4px]">RtdbNetServer...</span><span class="pl-[4px]">QascAddressSpaceModel::mimeData</span></div>
  </div>

  <!-- annotation arrow over the window -->
  <svg class="absolute -top-px -left-px" width="2401" height="1287" viewBox="0 0 2401 1287">
    <path d="M606 713C700 712 800 702 873 692C920 685 965 674 1007 662C1060 646 1110 630 1160 608C1190 595 1215 578 1233 567C1250 556 1265 547 1283 532C1300 517 1318 502 1333 483C1345 470 1356 457 1367 443C1380 427 1392 410 1403 395" fill="none" stroke="#ff0000" stroke-width="7.500"/>
    <path d="M1423 369 1389 388 1418 407z" fill="#ff0000"/>
  </svg>
</div>
</body>
</html>
